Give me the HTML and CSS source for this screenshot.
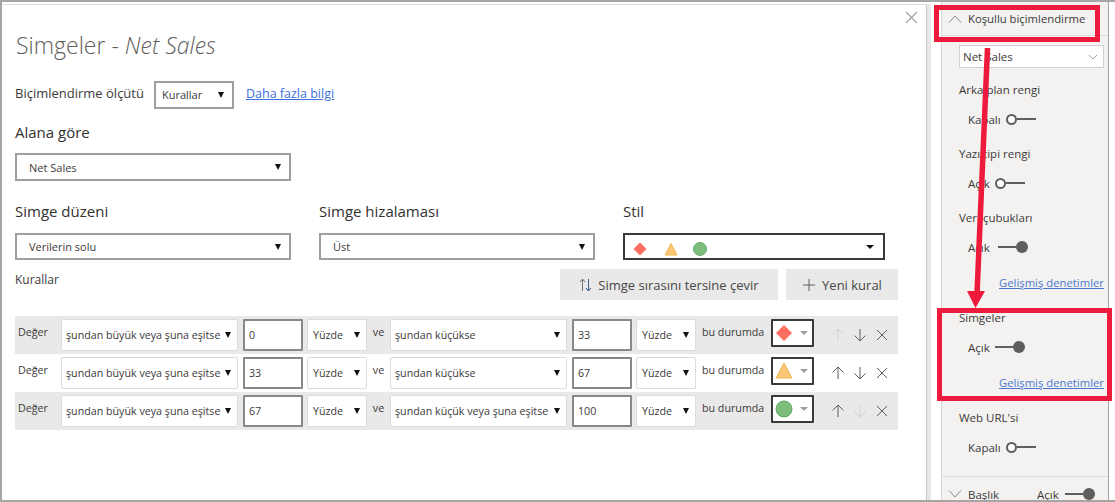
FILE: index.html
```html
<!DOCTYPE html>
<html lang="tr">
<head>
    <meta charset="UTF-8">
    <meta name="viewport" content="width=device-width, initial-scale=1.0">
    <title>Simgeler - Net Sales</title>
    <link rel="stylesheet" href="styles.css">
</head>
<body>
    <div class="screen">
        <main class="dialog">
            <button class="close" aria-label="Kapat">
                <svg width="13" height="13" viewBox="0 0 13 13"><path d="M1 1l11 11M12 1L1 12" /></svg>
            </button>
            <h1 class="title">Simgeler - <em>Net Sales</em></h1>

            <div class="format-row">
                <span class="format-text">Biçimlendirme ölçütü</span>
                <div class="select select-small">Kurallar<i class="caret"></i></div>
                <a href="#" class="link format-text">Daha fazla bilgi</a>
            </div>

            <h2 class="field-label field-by">Alana göre</h2>
            <div class="select select-field">Net Sales<i class="caret"></i></div>

            <div class="columns">
                <div>
                    <h2 class="field-label">Simge düzeni</h2>
                    <div class="select">Verilerin solu<i class="caret"></i></div>
                </div>
                <div>
                    <h2 class="field-label">Simge hizalaması</h2>
                    <div class="select">Üst<i class="caret"></i></div>
                </div>
                <div>
                    <h2 class="field-label">Stil</h2>
                    <div class="select select-style">
                        <span class="style-icons">
                            <svg width="18" height="14" viewBox="0 0 18 14"><path class="red" d="M9 .5L15.5 7 9 13.5 2.5 7z"/></svg>
                            <svg width="14" height="14" viewBox="0 0 14 14"><path class="amber" d="M7 1.5L13 13H1z"/></svg>
                            <svg width="14" height="14" viewBox="0 0 14 14"><circle class="green" cx="7" cy="7" r="6.5"/></svg>
                        </span>
                        <i class="caret caret-wide"></i>
                    </div>
                </div>
            </div>

            <div class="rules-head">
                <span class="rules-title">Kurallar</span>
                <button class="btn">
                    <svg width="13" height="14" viewBox="0 0 13 14"><path class="up" d="M3.5 13V1.5M1 4l2.5-3L6 4"/><path class="down" d="M9.5 1v11.5M7 10l2.5 3L12 10"/></svg>
                    Simge sırasını tersine çevir
                </button>
                <button class="btn btn-new">
                    <svg width="14" height="14" viewBox="0 0 14 14"><path d="M7 1v12M1 7h12"/></svg>
                    Yeni kural
                </button>
            </div>

            <div class="rules">
                <div class="rule rule-shaded">
                    <span class="rule-word">Değer</span>
                    <div class="pick">şundan büyük veya şuna eşitse<i class="caret"></i></div>
                    <div class="num">0</div>
                    <div class="pick">Yüzde<i class="caret"></i></div>
                    <span class="rule-and">ve</span>
                    <div class="pick">şundan küçükse<i class="caret"></i></div>
                    <div class="num">33</div>
                    <div class="pick">Yüzde<i class="caret"></i></div>
                    <span class="rule-then">bu durumda</span>
                    <div class="swatch">
                        <svg width="18" height="18" viewBox="0 0 18 18"><path class="red" d="M9 1l8 8-8 8-8-8z"/></svg>
                        <i class="caret caret-grey"></i>
                    </div>
                    <div class="moves">
                        <svg class="off" viewBox="0 0 14 14"><path d="M7 13V1M1.5 6.5L7 1l5.5 5.5"/></svg>
                        <svg viewBox="0 0 14 14"><path d="M7 1v12M1.5 7.5L7 13l5.5-5.5"/></svg>
                        <svg viewBox="0 0 14 14"><path d="M2 2l10 10M12 2L2 12"/></svg>
                    </div>
                </div>
                <div class="rule">
                    <span class="rule-word">Değer</span>
                    <div class="pick">şundan büyük veya şuna eşitse<i class="caret"></i></div>
                    <div class="num">33</div>
                    <div class="pick">Yüzde<i class="caret"></i></div>
                    <span class="rule-and">ve</span>
                    <div class="pick">şundan küçükse<i class="caret"></i></div>
                    <div class="num">67</div>
                    <div class="pick">Yüzde<i class="caret"></i></div>
                    <span class="rule-then">bu durumda</span>
                    <div class="swatch">
                        <svg width="18" height="18" viewBox="0 0 18 18"><path class="amber" d="M9 1l8 15H1z"/></svg>
                        <i class="caret caret-grey"></i>
                    </div>
                    <div class="moves">
                        <svg viewBox="0 0 14 14"><path d="M7 13V1M1.5 6.5L7 1l5.5 5.5"/></svg>
                        <svg viewBox="0 0 14 14"><path d="M7 1v12M1.5 7.5L7 13l5.5-5.5"/></svg>
                        <svg viewBox="0 0 14 14"><path d="M2 2l10 10M12 2L2 12"/></svg>
                    </div>
                </div>
                <div class="rule rule-shaded">
                    <span class="rule-word">Değer</span>
                    <div class="pick">şundan büyük veya şuna eşitse<i class="caret"></i></div>
                    <div class="num">67</div>
                    <div class="pick">Yüzde<i class="caret"></i></div>
                    <span class="rule-and">ve</span>
                    <div class="pick">şundan küçük veya şuna eşitse<i class="caret"></i></div>
                    <div class="num">100</div>
                    <div class="pick">Yüzde<i class="caret"></i></div>
                    <span class="rule-then">bu durumda</span>
                    <div class="swatch">
                        <svg width="18" height="18" viewBox="0 0 18 18"><circle class="green" cx="9" cy="9" r="8"/></svg>
                        <i class="caret caret-grey"></i>
                    </div>
                    <div class="moves">
                        <svg viewBox="0 0 14 14"><path d="M7 13V1M1.5 6.5L7 1l5.5 5.5"/></svg>
                        <svg class="off" viewBox="0 0 14 14"><path d="M7 1v12M1.5 7.5L7 13l5.5-5.5"/></svg>
                        <svg viewBox="0 0 14 14"><path d="M2 2l10 10M12 2L2 12"/></svg>
                    </div>
                </div>
            </div>
        </main>

        <aside class="pane">
            <div class="pane-head">
                <svg width="14" height="8" viewBox="0 0 14 8"><path d="M1 7.5L7 1l6 6.5"/></svg>
                Koşullu biçimlendirme
            </div>
            <div class="pane-select">
                Net Sales
                <svg width="10" height="6" viewBox="0 0 10 6"><path d="M1 1l4 4 4-4"/></svg>
            </div>

            <div class="opt">Arka plan rengi</div>
            <div class="switch-row">Kapalı<span class="switch"><b class="knob-off"></b><u></u></span></div>

            <div class="opt">Yazı tipi rengi</div>
            <div class="switch-row">Açık<span class="switch"><b class="knob-off"></b><u></u></span></div>

            <div class="opt">Veri çubukları</div>
            <div class="switch-row switch-row-wide">Açık<span class="switch"><u></u><b class="knob-on"></b></span></div>
            <a href="#" class="link pane-link">Gelişmiş denetimler</a>

            <div class="opt">Simgeler</div>
            <div class="switch-row">Açık<span class="switch"><u></u><b class="knob-on"></b></span></div>
            <a href="#" class="link pane-link">Gelişmiş denetimler</a>

            <div class="opt">Web URL'si</div>
            <div class="switch-row">Kapalı<span class="switch"><b class="knob-off"></b><u></u></span></div>

            <div class="pane-foot">
                <svg width="14" height="8" viewBox="0 0 14 8"><path d="M1 .5L7 7l6-6.5"/></svg>
                <span class="foot-name">Başlık</span>
                <span>Açık</span>
                <span class="switch"><u></u><b class="knob-on"></b></span>
            </div>
        </aside>

        <!-- red callouts drawn over the screenshot -->
        <div class="callout callout-head"></div>
        <div class="callout callout-icons"></div>
        <svg class="callout-arrow" width="1115" height="502" viewBox="0 0 1115 502">
            <path d="M987.5 48L977 294" />
            <polygon points="967,291 985,291 975.5,308" />
        </svg>
    </div>
</body>
</html>
```

FILE: styles.css
```css
* {
    box-sizing: border-box;
}
html, body {
    margin: 0;
    padding: 0;
}
body {
    font-family: "Open Sans", "Noto Sans", sans-serif;
    color: #3b3a39;
}
svg {
    display: block;
    fill: none;
}
.screen {
    position: relative;
    display: flex;
    width: 1115px;
    height: 502px;
    overflow: hidden;
    background: #fff;
    border: 2px solid #a6a6a6;
    border-right: 0;
    font-size: 11.5px;
}

/* dialog */
.dialog {
    position: relative;
    width: 925px;
    height: 498px;
    margin-top: 2px;
    padding: 0 13px;
    background: #fff;
    border-top: 1px solid #dedede;
    border-right: 1px solid #c8c8c8;
    box-shadow: 4px 0 0 #e8e8e8;
    flex-shrink: 0;
}
.close {
    position: absolute;
    top: 6px;
    right: 8px;
    padding: 0;
    border: 0;
    background: none;
}
.close path {
    stroke: #a19f9d;
    stroke-width: 1.1;
}
.title {
    margin: 23px 0 0 1px;
    height: 34px;
    font-size: 23px;
    font-weight: 300;
    line-height: 34px;
    color: #605e5c;
}
.title em {
    font-style: italic;
}
.format-row {
    display: flex;
    align-items: center;
    margin-top: 19px;
    height: 27px;
    font-size: 13px;
}
.format-text {
    margin-bottom: 3px;
}
.format-row .select-small {
    margin-left: 10px;
}
.format-row .link {
    margin-left: 12px;
    font-size: 12.5px;
}
.link {
    color: #3b6fe0;
    text-decoration: underline;
}
.select {
    display: flex;
    align-items: center;
    justify-content: space-between;
    height: 28px;
    padding: 0 8px 0 12px;
    background: #fff;
    border: 2px solid #a19f9d;
    font-size: 11px;
}
.select-small {
    width: 80px;
    padding-left: 6px;
}
.select-field {
    width: 276px;
}
.caret {
    width: 0;
    height: 0;
    border-left: 3.5px solid transparent;
    border-right: 3.5px solid transparent;
    border-top: 6px solid #111;
    flex-shrink: 0;
}
.caret-wide {
    border-left-width: 4px;
    border-right-width: 4px;
    border-top-width: 4px;
}
.caret-grey {
    border-left-width: 4px;
    border-right-width: 4px;
    border-top: 4px solid #a19f9d;
}
.field-label {
    margin: 0 0 11px;
    height: 21px;
    font-size: 15px;
    font-weight: 400;
    line-height: 21px;
    color: #323130;
}
.field-by {
    margin-top: 14px;
    margin-bottom: 10px;
}
.columns {
    display: grid;
    grid-template-columns: 276px 276px 262px;
    gap: 28px;
    margin-top: 20px;
}
.columns .select {
    height: 27px;
}
.select-style {
    border-color: #3b3a39;
    padding-left: 6px;
    padding-right: 9px;
}
.style-icons {
    display: flex;
    align-items: center;
    gap: 15px;
    margin-top: 4px;
}
.red {
    fill: #fd7061;
}
.amber {
    fill: #fdc873;
    stroke: #f2b554;
}
.green {
    fill: #7cbd7c;
    stroke: #6aa96a;
}

/* rules */
.rules-head {
    display: flex;
    align-items: flex-start;
    gap: 8px;
    width: 883px;
    margin-top: 9px;
}
.rules-title {
    margin-top: 2px;
    margin-right: auto;
    font-size: 12px;
}
.btn {
    display: flex;
    align-items: center;
    justify-content: center;
    gap: 6px;
    width: 218px;
    height: 31px;
    padding: 0;
    border: 0;
    background: #e9e9e9;
    color: #484644;
    font-family: inherit;
    font-size: 13px;
}
.btn-new {
    width: 112px;
}
.btn svg path {
    stroke: #605e5c;
    stroke-width: 1;
}
.btn .up {
    stroke: #7a6f6a;
}
.btn .down {
    stroke: #3a5f8a;
}
.rules {
    margin-top: 16px;
    width: 883px;
}
.rule {
    display: flex;
    align-items: center;
    height: 38px;
    font-size: 10.7px;
}
.rule-shaded {
    background: #e9e9e9;
}
.rule-word {
    width: 46px;
    padding-left: 3px;
    margin-top: -6px;
}
.pick {
    display: flex;
    align-items: center;
    justify-content: space-between;
    width: 177px;
    height: 32px;
    padding: 0 6px 0 4px;
    background: #fff;
    border: 1px solid #dcdcdc;
    border-radius: 2px;
    white-space: nowrap;
}
.num {
    display: flex;
    align-items: center;
    width: 60px;
    height: 32px;
    margin: 0 4px 0 5px;
    padding-left: 4px;
    background: #fff;
    border: 2px solid #8a8886;
    border-radius: 1px;
}
.num + .pick {
    width: 60px;
    padding-left: 5px;
}
.rule-and {
    width: 23px;
    text-align: center;
    margin-top: -6px;
}
.rule-then {
    width: 75px;
    padding-left: 6px;
    margin-top: -6px;
    white-space: nowrap;
}
.swatch {
    display: flex;
    align-items: center;
    gap: 7px;
    width: 43px;
    height: 28px;
    margin-top: -5px;
    padding-left: 2px;
    background: #fff;
    border: 2px solid #3b3a39;
    border-radius: 1px;
}
.moves {
    display: flex;
    gap: 8px;
    margin-left: 17px;
}
.moves svg {
    width: 14px;
    height: 14px;
}
.moves path {
    stroke: #605e5c;
    stroke-width: 1;
}
.moves .off path {
    stroke: #d2d0ce;
}

/* format pane */
.pane {
    width: 168px;
    height: 498px;
    margin-left: 14px;
    background: #f3f2f1;
    border-left: 1px solid #d8d8d8;
    border-right: 1px solid #a6a6a6;
    font-size: 11.5px;
    flex-shrink: 0;
}
.pane-head {
    display: flex;
    align-items: center;
    gap: 6px;
    height: 34px;
    padding-left: 6px;
    border-bottom: 1px solid #dcdcdc;
    font-size: 11.3px;
}
.pane-head path, .pane-foot path {
    stroke: #8a8886;
    stroke-width: 1;
}
.pane-select {
    display: flex;
    align-items: center;
    justify-content: space-between;
    width: 145px;
    height: 23px;
    margin: 9px 0 0 17px;
    padding: 0 5px 0 3px;
    background: #fff;
    border: 1px solid #d2d0ce;
}
.pane-select path {
    stroke: #a19f9d;
}
.opt {
    height: 16px;
    margin: 19px 0 0 17px;
    line-height: 16px;
}
.pane-select + .opt {
    margin-top: 14px;
}
.switch-row {
    display: flex;
    align-items: center;
    gap: 5px;
    height: 16px;
    margin: 13px 0 0 26px;
}
.switch-row-wide {
    gap: 8px;
}
.switch {
    display: flex;
    align-items: center;
    width: 30px;
}
.switch u {
    flex: 1;
    height: 2px;
    background: #605e5c;
}
.knob-off {
    width: 11px;
    height: 11px;
    border: 2px solid #605e5c;
    border-radius: 50%;
    background: #fff;
}
.knob-on {
    width: 12px;
    height: 12px;
    border-radius: 50%;
    background: #605e5c;
}
.pane-link {
    display: block;
    height: 16px;
    margin: 20px 0 0 57px;
    font-size: 11.3px;
    line-height: 16px;
    white-space: nowrap;
    color: #4a78cf;
}
.pane-foot {
    display: flex;
    align-items: center;
    height: 25px;
    margin-top: 21px;
    padding: 10px 0 0 6px;
    border-top: 1px solid #dcdcdc;
}
.foot-name {
    width: 69px;
    margin-left: 6px;
}
.pane-foot .switch {
    margin-left: 6px;
}

/* red annotations */
.callout {
    position: absolute;
    border: 5px solid #ee1a3c;
}
.callout-head {
    left: 932px;
    top: 3px;
    width: 166px;
    height: 37px;
}
.callout-icons {
    left: 935px;
    top: 306px;
    width: 175px;
    height: 93px;
}
.callout-arrow {
    position: absolute;
    left: -2px;
    top: -2px;
}
.callout-arrow path {
    stroke: #ee1a3c;
    stroke-width: 5.5;
}
.callout-arrow polygon {
    fill: #ee1a3c;
}
```
